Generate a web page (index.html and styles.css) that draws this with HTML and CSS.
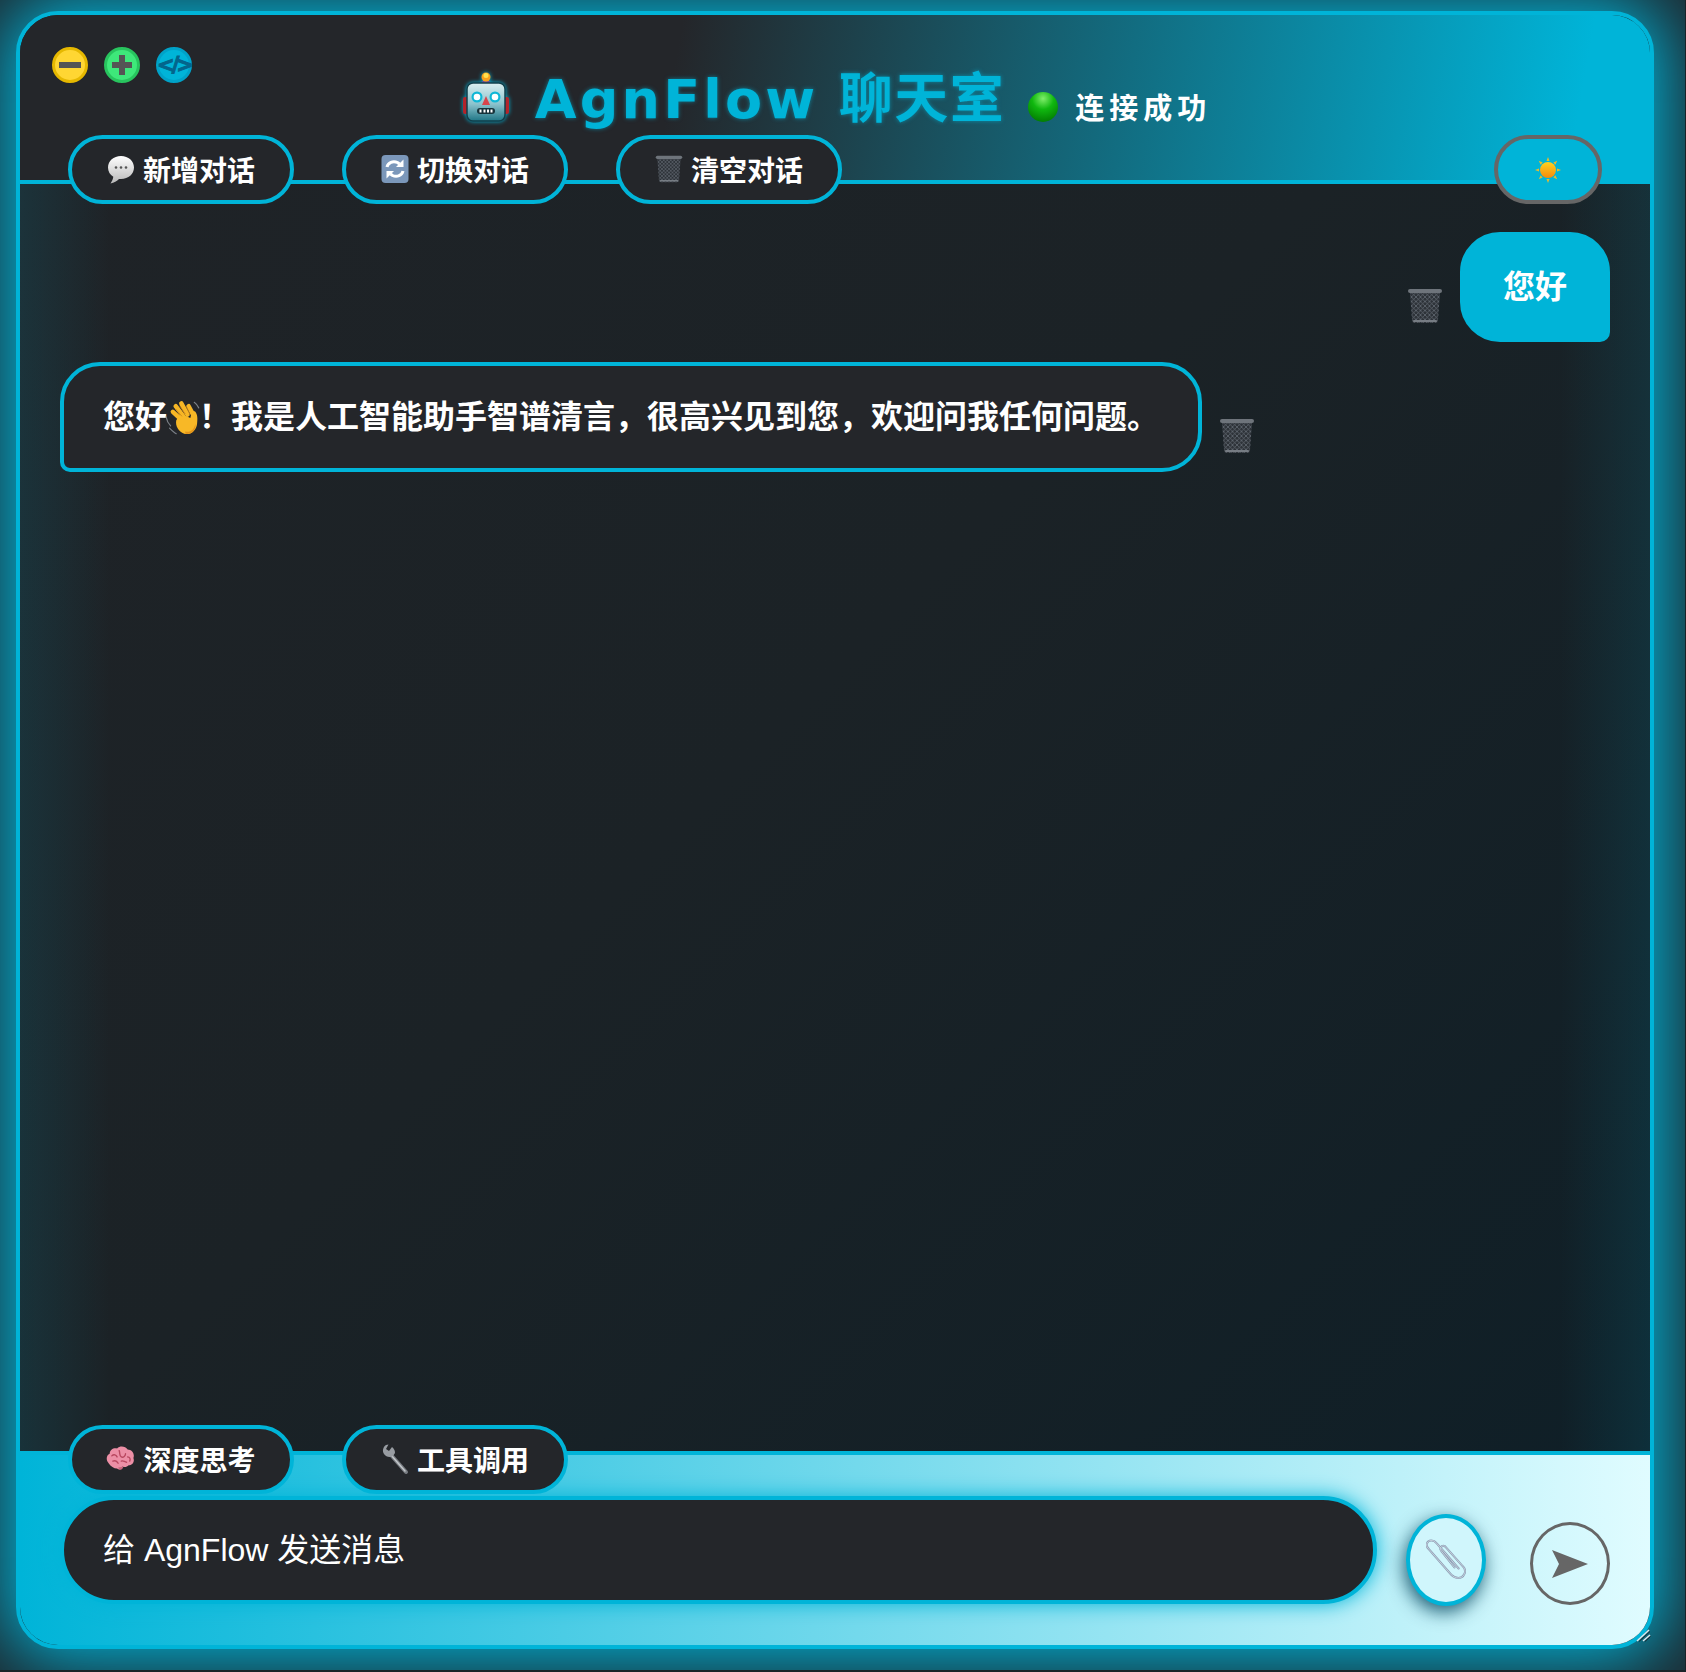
FILE: index.html
```html
<!DOCTYPE html>
<html lang="zh-CN">
<head>
  <meta charset="UTF-8" />
  <meta name="viewport" content="width=device-width, initial-scale=1" />
  <title>AgnFlow 聊天室</title>
  <link rel="stylesheet" href="styles.css">
</head>
<body>

  <!-- shared emoji drawings -->
  <svg class="defs" aria-hidden="true">
    <defs>
      <linearGradient id="robotHead" x1="0" y1="0" x2="0" y2="1">
        <stop offset="0" stop-color="#dbeff1" />
        <stop offset="0.55" stop-color="#8cc3cd" />
        <stop offset="1" stop-color="#1f7686" />
      </linearGradient>
      <linearGradient id="bubbleFill" x1="0" y1="0" x2="0" y2="1">
        <stop offset="0" stop-color="#ffffff" />
        <stop offset="1" stop-color="#b9b9b9" />
      </linearGradient>
      <linearGradient id="sunFill" x1="0" y1="0" x2="0" y2="1">
        <stop offset="0" stop-color="#ffd21f" />
        <stop offset="1" stop-color="#f58a0b" />
      </linearGradient>
      <radialGradient id="greenBall" cx="0.5" cy="0.22" r="0.8">
        <stop offset="0" stop-color="#7fee6a" />
        <stop offset="0.45" stop-color="#10b80f" />
        <stop offset="1" stop-color="#027a02" />
      </radialGradient>
      <pattern id="mesh" width="4.500" height="4.500" patternUnits="userSpaceOnUse">
        <path d="M0 0L4.500 4.500M4.500 0L0 4.500" stroke="#6a717a" stroke-width="0.700" />
      </pattern>

      <symbol id="i-trash" viewBox="0 0 36 36">
        <path d="M3 4H33L31 32Q31 35 28 35H8Q5 35 5 32Z" fill="#2d3238" />
        <path d="M3 4H33L31 32Q31 35 28 35H8Q5 35 5 32Z" fill="url(#mesh)" />
        <rect x="1" y="1" width="34" height="4" rx="2" fill="#6e747b" />
        <rect x="6" y="32" width="24" height="2" rx="1" fill="#767c83" />
      </symbol>

      <symbol id="i-bubble" viewBox="0 0 28 32">
        <path d="M14 3C6.500 3 1 8 1 14.500C1 18.500 3 21.800 6.300 23.800C6 26 5 28.500 3.500 30.500C7 30 10 28 12 26C12.700 26 13.300 26 14 26C21.500 26 27 21 27 14.500C27 8 21.500 3 14 3Z" fill="url(#bubbleFill)" />
        <circle cx="9" cy="14.500" r="1.300" fill="#555" />
        <circle cx="14" cy="14.500" r="1.300" fill="#555" />
        <circle cx="19" cy="14.500" r="1.300" fill="#555" />
      </symbol>

      <symbol id="i-refresh" viewBox="0 0 28 32">
        <rect x="0.500" y="2" width="27" height="28" rx="4" fill="#7b97ba" />
        <path d="M6 14C7 9.500 12 7.500 16.500 9.500L18.500 11" fill="none" stroke="#fff" stroke-width="3" />
        <path d="M22.500 6.500V14H15Z" fill="#fff" />
        <path d="M22 18C21 22.500 16 24.500 11.500 22.500L9.500 21" fill="none" stroke="#fff" stroke-width="3" />
        <path d="M5.500 25.500V18H13Z" fill="#fff" />
      </symbol>

      <symbol id="i-brain" viewBox="0.500 1.500 27.500 24">
        <path d="M3 18C0 15 1 10 4 9C4 5 8 3 11 4C14 1 19 2 21 5C25 5 28 9 26.500 13C28 17 25 20 22 20C20 22 18 22 16 21C15 24 13 25 11 23C8 23 5 21 3 18Z" fill="#ec8fa6" />
        <path d="M6 11C8 9 10 10 11 12M13 6C14 9 13 11 15 12C17 13 19 11 19 9M21 12C23 12 24 14 23 16M7 16C9 15 11 16 12 18M15 16C17 15 18 17 20 17" fill="none" stroke="#b8475f" stroke-width="1.300" stroke-linecap="round" />
        <path d="M12 22C13 25 16 25 17 21Z" fill="#c9667d" />
      </symbol>

      <symbol id="i-wrench" viewBox="0 0 28 32">
        <path d="M25 29L10 12" stroke="#787c82" stroke-width="4" stroke-linecap="round" />
        <path d="M24 28L10 12" stroke="#c2c6ca" stroke-width="1.500" stroke-linecap="round" />
        <path d="M5 2C2 4 1 8 3 11C5 14 9 15 12 13L14 10C14 7 13 6 11 4L8 8L5 6L7.500 1.500Z" fill="#989ca2" />
      </symbol>

      <symbol id="i-hand" viewBox="0 0 32 32">
        <g fill="none" stroke="#f7b625" stroke-width="4" stroke-linecap="round">
          <path d="M14 17L7 10.500" />
          <path d="M16 14L9.500 5.500" />
          <path d="M20 13L14.500 3" />
          <path d="M25 13L21 5.500" />
        </g>
        <path d="M10 18C9 23 12 28 17 30C24 31.500 28 26 28.500 21C29 17 29 13 27 10.500C25.500 9 23.500 10 23.500 12L22.500 16L14 12Z" fill="#f8b826" />
        <path d="M9.500 8L15 14.500M13 5L18 12.500M19 5.500L22 12.500" fill="none" stroke="#c9821a" stroke-width="0.700" />
        <path d="M18 28C23 29 26 26 27 21C28 26 24 31 18 30Z" fill="#e3931a" />
        <path d="M1 15C1.500 18 3 21 5 23M4 25C6 27 8 29 10 30M26 2C27.500 3 29 5 30 7" fill="none" stroke="#7d8288" stroke-width="1" stroke-linecap="round" />
      </symbol>
    </defs>
  </svg>

  <div class="window">

    <div class="header">
      <div class="controls">
        <span class="dot dot-yellow">
          <svg viewBox="0 0 36 36" width="36" height="36"><rect x="7" y="15" width="22" height="6" fill="#555" /></svg>
        </span>
        <span class="dot dot-green">
          <svg viewBox="0 0 36 36" width="36" height="36"><path d="M8 15H15V8H21V15H28V21H21V28H15V21H8Z" fill="#555" /></svg>
        </span>
        <span class="dot dot-blue">&lt;/&gt;</span>
      </div>

      <div class="title-row">
        <svg class="robot" viewBox="0 0 46 50" width="46" height="50" aria-hidden="true">
          <rect x="0" y="25" width="5" height="17" rx="2" fill="#b3232a" />
          <rect x="41" y="25" width="5" height="17" rx="2" fill="#b3232a" />
          <path d="M18 13Q18 8 23 8Q28 8 28 13Z" fill="#6b4f9c" />
          <circle cx="23" cy="5" r="4.500" fill="#f9a11b" />
          <circle cx="23" cy="3.500" r="2.500" fill="#ffe14d" />
          <rect x="4" y="11" width="38" height="38" rx="6" fill="url(#robotHead)" stroke="#123f4b" stroke-width="1.500" />
          <circle cx="14" cy="25" r="5.500" fill="#0fb7d6" />
          <circle cx="14" cy="25" r="3.300" fill="#fff" />
          <circle cx="32" cy="25" r="5.500" fill="#0fb7d6" />
          <circle cx="32" cy="25" r="3.300" fill="#fff" />
          <path d="M23 24L27 33H19Z" fill="#d8444c" />
          <rect x="14" y="36" width="18" height="6" rx="3" fill="#16323a" />
          <path d="M17.500 37.500V40.500M21.500 37.500V40.500M25 37.500V40.500M28.500 37.500V40.500" stroke="#fff" stroke-width="2" />
        </svg>
        <h1 class="brand"><span class="brand-latin">AgnFlow</span> 聊天室</h1>
        <svg class="status-dot" viewBox="0 0 30 30" width="30" height="30" aria-hidden="true"><circle cx="15" cy="15" r="15" fill="url(#greenBall)" /></svg>
        <span class="status-text">连接成功</span>
      </div>

      <div class="toolbar">
        <button class="pill"><svg class="emoji" width="28" height="32"><use href="#i-bubble" /></svg>新增对话</button>
        <button class="pill"><svg class="emoji" width="28" height="32"><use href="#i-refresh" /></svg>切换对话</button>
        <button class="pill"><svg class="emoji" width="28" height="32"><use href="#i-trash" /></svg>清空对话</button>
        <button class="theme-btn">
          <svg viewBox="0 0 28 28" width="28" height="28" aria-hidden="true">
            <path d="M14 1L15.500 5H12.500ZM14 27L12.500 23H15.500ZM1 14L5 12.500V15.500ZM27 14L23 15.500V12.500ZM4.800 4.800L8.700 6.600L6.600 8.700ZM23.200 23.200L19.300 21.400L21.400 19.300ZM23.200 4.800L21.400 8.700L19.300 6.600ZM4.800 23.200L6.600 19.300L8.700 21.400Z" fill="#e7bb2e" />
            <circle cx="14" cy="14" r="8" fill="url(#sunFill)" />
          </svg>
        </button>
      </div>
    </div>

    <div class="chat">
      <div class="msg-row msg-row-user">
        <svg class="msg-trash" width="36" height="36"><use href="#i-trash" /></svg>
        <div class="bubble bubble-user">您好</div>
      </div>
      <div class="msg-row">
        <div class="bubble bubble-bot">您好<svg class="hand" width="36" height="36"><use href="#i-hand" /></svg>！我是人工智能助手智谱清言，很高兴见到您，欢迎问我任何问题。</div>
        <svg class="msg-trash" width="36" height="36"><use href="#i-trash" /></svg>
      </div>
    </div>

    <div class="footer">
      <div class="toolbar toolbar-bottom">
        <button class="pill"><svg class="emoji" width="29" height="27"><use href="#i-brain" /></svg>深度思考</button>
        <button class="pill"><svg class="emoji" width="28" height="32"><use href="#i-wrench" /></svg>工具调用</button>
      </div>
      <div class="input-row">
        <input class="msg-input" type="text" placeholder="给 AgnFlow 发送消息" autocomplete="off" />
        <button class="attach-btn">
          <svg viewBox="2 8 38 38" width="40" height="40" aria-hidden="true">
            <path d="M33 36L12 12C9 8 4 9 3 12C2 14 3 16 5 18L26 42C30 46 36 46 38 42C40 39 39 36 37 34L21 16C20 14 17 14 16 16C15 17 16 19 17 20L29 35" fill="none" stroke="#8e9fb5" stroke-width="2" stroke-linecap="round" />
            <path d="M33 36L12 12C9 8 4 9 3 12C2 14 3 16 5 18L26 42C30 46 36 46 38 42C40 39 39 36 37 34L21 16C20 14 17 14 16 16C15 17 16 19 17 20L29 35" fill="none" stroke="#e3e9f1" stroke-width="0.600" stroke-linecap="round" />
          </svg>
        </button>
        <button class="send-btn">
          <svg viewBox="0 0 36 28" width="36" height="28" aria-hidden="true"><path d="M0 0L36 14L0 28L7 14Z" fill="#666" /></svg>
        </button>
      </div>
    </div>

    <svg class="resize-grip" viewBox="0 0 15 13" width="15" height="13" aria-hidden="true">
      <path d="M1 12L13 1" stroke="#dfe9ec" stroke-width="1.500" />
      <path d="M7 12L14 6" stroke="#dfe9ec" stroke-width="1.500" />
      <path d="M3 12.500L14 2.500M9 12.500L14.500 7.500" stroke="#1a2a30" stroke-width="1" />
    </svg>
  </div>

</body>
</html>
```

FILE: styles.css
```css
/* General Styling */
html {
  background-color: #1a2329;
}
body {
  margin: 0;
  width: 1685px;
  height: 1670px;
  padding: 11px 0 0 16px;
  box-sizing: border-box;
  overflow: hidden;
  background-color: #1d2a31;
  font-family: "Liberation Sans", "Noto Sans CJK SC", sans-serif;
  color: white;
}
.defs {
  display: block;
  width: 0;
  height: 0;
}
button {
  font-family: inherit;
  cursor: pointer;
}

/* Window */
.window {
  position: relative;
  display: flex;
  flex-direction: column;
  width: 1638px;
  height: 1638px;
  box-sizing: border-box;
  border: 4px solid #00b4d8;
  border-radius: 42px;
  background-color: #1d2226;
  box-shadow: 0 0 70px 12px #00b4d8;
}

/* Header */
.header {
  position: relative;
  z-index: 1;
  height: 169px;
  flex-shrink: 0;
  box-sizing: border-box;
  padding-top: 32px;
  border-bottom: 4px solid #00b4d8;
  border-radius: 38px 38px 0 0;
  background: linear-gradient(100deg, #24262a 40%, #00b4d8 95%);
}
.controls {
  display: flex;
  gap: 16px;
  height: 36px;
  padding-left: 32px;
}
.dot {
  width: 36px;
  height: 36px;
  box-sizing: border-box;
  border-radius: 50%;
  display: flex;
  align-items: center;
  justify-content: center;
}
.dot svg {
  flex-shrink: 0;
}
.dot-yellow {
  background-color: #ffd633;
  border: 3px solid #e6b800;
}
.dot-green {
  background-color: #3ee87a;
  border: 3px solid #28c45e;
}
.dot-blue {
  background-color: #00b4d8;
  border: 3px solid #00a2c8;
  color: #03658c;
  font-family: "DejaVu Sans", sans-serif;
  font-size: 21px;
  font-weight: bold;
  letter-spacing: -3px;
  white-space: nowrap;
  -webkit-text-stroke: 1px #03658c;
}
.title-row {
  display: flex;
  align-items: center;
  justify-content: center;
  height: 50px;
  margin-top: -11px;
  padding-left: 4px;
}
.robot {
  filter: drop-shadow(0 0 2px #00b4d8);
}
.brand {
  margin: 6px 0 0 26px;
  color: #00b4d8;
  font-family: "DejaVu Sans", "Noto Sans CJK SC", sans-serif;
  font-size: 54px;
  font-weight: bold;
  letter-spacing: 1.500px;
  line-height: 50px;
  white-space: nowrap;
  text-shadow: 0 0 4px rgba(0, 180, 216, 0.6);
}
.brand-latin {
  letter-spacing: 3.200px;
}
.status-dot {
  margin: 20px 0 0 23px;
}
.status-text {
  margin: 18px 0 0 17px;
  font-family: "Noto Sans CJK SC", sans-serif;
  font-size: 29px;
  font-weight: bold;
  letter-spacing: 5px;
  white-space: nowrap;
}

/* Pill buttons */
.toolbar {
  display: flex;
  gap: 48px;
  height: 69px;
  margin-top: 13px;
  padding: 0 48px;
}
.toolbar-bottom {
  margin-top: -30px;
  position: relative;
}
.pill {
  display: flex;
  align-items: center;
  justify-content: center;
  gap: 8px;
  width: 226px;
  height: 69px;
  padding: 0 0 2px;
  box-sizing: border-box;
  border: 4px solid #00b4d8;
  border-radius: 35px;
  background-color: #24262a;
  color: white;
  font-family: "Noto Sans CJK SC", sans-serif;
  font-size: 28px;
  font-weight: bold;
}
.theme-btn {
  display: flex;
  align-items: center;
  justify-content: center;
  width: 108px;
  height: 69px;
  margin-left: auto;
  padding: 0;
  box-sizing: border-box;
  border: 4px solid #666;
  border-radius: 35px;
  background-color: #00b4d8;
}

/* Messages */
.chat {
  flex: 1;
  display: flex;
  flex-direction: column;
  gap: 20px;
  min-height: 0;
  padding: 48px 40px 0 40px;
  background:
    linear-gradient(90deg, rgba(0, 180, 216, 0.11) 0, rgba(0, 180, 216, 0) 90px, rgba(0, 180, 216, 0) calc(100% - 90px), rgba(0, 180, 216, 0.11) 100%),
    linear-gradient(135deg, #1f2327 0%, #1b2226 45%, #0f1f27 100%);
}
.msg-row {
  display: flex;
  align-items: flex-start;
  gap: 17px;
}
.msg-row-user {
  justify-content: flex-end;
}
.msg-trash {
  margin-top: 56px;
  flex-shrink: 0;
}
.bubble {
  box-sizing: border-box;
  height: 110px;
  padding: 26px 39px;
  border: 4px solid #00b4d8;
  font-family: "Noto Sans CJK SC", sans-serif;
  font-size: 32px;
  font-weight: bold;
  line-height: 44px;
  white-space: nowrap;
}
.bubble-user {
  background-color: #00b4d8;
  border-radius: 40px 40px 10px 40px;
}
.bubble-bot {
  background-color: #24262a;
  border-radius: 40px 40px 40px 10px;
}
.hand {
  margin: 0 -2px;
  vertical-align: -8px;
}

/* Footer */
.footer {
  flex-shrink: 0;
  height: 194px;
  box-sizing: border-box;
  border-top: 4px solid #00b4d8;
  border-radius: 0 0 38px 38px;
  background: linear-gradient(90deg, #00b4d8 0%, #e0fcff 100%);
}
.input-row {
  display: flex;
  align-items: flex-start;
  margin-top: 2px;
  padding: 0 40px;
}
.msg-input {
  width: 1317px;
  height: 108px;
  box-sizing: border-box;
  flex-shrink: 0;
  padding: 0 0 0 39px;
  border: 4px solid #00b4d8;
  border-radius: 56px;
  outline: none;
  background-color: #24262a;
  color: white;
  font-family: "Liberation Sans", "Noto Sans CJK SC", sans-serif;
  font-size: 32px;
  box-shadow: 0 0 20px #00b4d8;
}
.msg-input::placeholder {
  color: white;
  opacity: 1;
}
.attach-btn {
  display: flex;
  align-items: center;
  justify-content: center;
  width: 80px;
  height: 92px;
  margin: 18px 0 0 29px;
  padding: 0 0 3px;
  box-sizing: border-box;
  border: 4px solid #00b4d8;
  border-radius: 50%;
  background-color: #d0f6fc;
  box-shadow: -2px 6px 18px rgba(5, 70, 95, 0.85);
}
.send-btn {
  display: flex;
  align-items: center;
  justify-content: center;
  width: 80px;
  height: 83px;
  margin: 26px 0 0 44px;
  padding: 0;
  box-sizing: border-box;
  border: 3px solid #666;
  border-radius: 50%;
  background: transparent;
}

.resize-grip {
  position: absolute;
  right: -1px;
  bottom: 3px;
}
```
